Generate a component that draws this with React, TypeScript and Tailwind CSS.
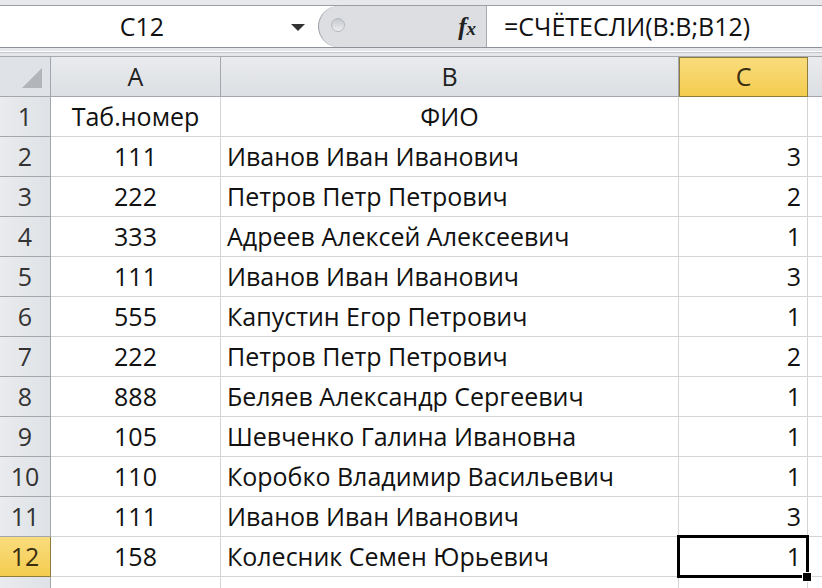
import React from "react";

const rows: [string, string, string, string][] = [
  ["1", "Таб.номер", "ФИО", ""],
  ["2", "111", "Иванов Иван Иванович", "3"],
  ["3", "222", "Петров Петр Петрович", "2"],
  ["4", "333", "Адреев Алексей Алексеевич", "1"],
  ["5", "111", "Иванов Иван Иванович", "3"],
  ["6", "555", "Капустин Егор Петрович", "1"],
  ["7", "222", "Петров Петр Петрович", "2"],
  ["8", "888", "Беляев Александр Сергеевич", "1"],
  ["9", "105", "Шевченко Галина Ивановна", "1"],
  ["10", "110", "Коробко Владимир Васильевич", "1"],
  ["11", "111", "Иванов Иван Иванович", "3"],
  ["12", "158", "Колесник Семен Юрьевич", "1"],
];

const font = { fontFamily: "'Open Sans', 'Liberation Sans', sans-serif" };

export default function App() {
  return (
    <div className="w-[822px] h-[588px] overflow-hidden bg-white text-[#111]" style={font}>
      {/* top strip */}
      <div className="h-[6px] bg-[#e6e8ec] border-b border-[#9a9ea6]" />
      {/* formula bar */}
      <div className="flex h-[42px] border-b border-[#8d9199]">
        <div className="w-[318px] bg-white flex items-center relative">
          <span className="flex-1 text-center text-[25px] pl-[6px]">C12</span>
          <div className="w-[40px] flex justify-center">
            <div className="w-0 h-0 border-l-[7px] border-r-[7px] border-t-[7px] border-l-transparent border-r-transparent border-t-[#333] mt-[2px]" />
          </div>
        </div>
        <div className="w-[169px] bg-[#dcdee2] rounded-l-[26px] border-l border-[#9a9ea6] border-r border-r-[#a8abb1] flex items-center relative">
          <div className="absolute left-[12px] top-[12px] w-[14px] h-[14px] rounded-full bg-gradient-to-b from-[#c6c9ce] to-[#eceef0] border border-[#b5b8be]" />
          <span className="ml-auto mr-[10px] text-[25px] italic font-bold text-[#222] leading-none" style={{ fontFamily: "'Liberation Serif', serif" }}>
            f<span className="text-[19px]">x</span>
          </span>
        </div>
        <div className="flex-1 bg-white flex items-center pl-[17px] text-[25px]">=СЧЁТЕСЛИ(B:B;B12)</div>
      </div>
      {/* gap strip */}
      <div className="h-[9px] bg-[#e4e6ea] border-b border-[#a7aab0] flex flex-col">
        <div className="h-[3px]" />
        <div className="h-[1px] bg-white" />
        <div className="h-[1px] bg-[#c3c6cb]" />
      </div>
      {/* grid */}
      <div className="grid grid-cols-[51px_170px_458px_129px_14px] auto-rows-[40px] text-[25px]">
        {/* header row */}
        <div className="bg-[#dfe2e6] border-r border-b border-[#a3a7ad] relative">
          <svg className="absolute right-[8px] bottom-[8px]" width="20" height="20" viewBox="0 0 20 20">
            <polygon points="20,0 20,20 0,20" fill="#b2b5ba" />
          </svg>
        </div>
        <div className="bg-gradient-to-b from-[#e9ebee] to-[#dcdfe3] border-r border-b border-[#a3a7ad] flex items-center justify-center text-[#222]">A</div>
        <div className="bg-gradient-to-b from-[#e9ebee] to-[#dcdfe3] border-r border-b border-[#a3a7ad] flex items-center justify-center text-[#222]">B</div>
        <div className="bg-gradient-to-b from-[#f9dc7c] to-[#f4cc4e] border border-[#8f7d3b] flex items-center justify-center text-[#3a2f10]">C</div>
        <div className="bg-gradient-to-b from-[#e9ebee] to-[#dcdfe3] border-b border-[#a3a7ad]" />
        {rows.map(([n, a, b, c]) => {
          const sel = n === "12";
          return (
            <React.Fragment key={n}>
              <div
                className={
                  sel
                    ? "bg-gradient-to-b from-[#f9dc7c] to-[#f4cc4e] border-r border-b border-[#8f7d3b] flex items-center justify-center text-[#3a2f10]"
                    : "bg-gradient-to-r from-[#e9ebee] to-[#dfe2e6] border-r border-b border-[#a3a7ad] flex items-center justify-center text-[#333]"
                }
              >
                {n}
              </div>
              <div className="border-r border-b border-[#d4d4d4] flex items-center justify-center">{a}</div>
              <div className={`border-r border-b border-[#d4d4d4] flex items-center ${n === "1" ? "justify-center" : "pl-[6px]"}`}>{b}</div>
              <div className="border-r border-b border-[#d4d4d4] flex items-center justify-end pr-[6px] relative">
                {sel && (
                  <>
                    <div className="absolute left-[-2px] right-[-2px] top-[-2px] bottom-[-2px] border-[3px] border-black" />
                    <div className="absolute right-[-5px] bottom-[-6px] w-[10px] h-[10px] bg-black border border-white z-10" />
                  </>
                )}
                <span className="relative">{c}</span>
              </div>
              <div className="border-b border-[#d4d4d4]" />
            </React.Fragment>
          );
        })}
        <div className="bg-gradient-to-r from-[#e9ebee] to-[#dfe2e6] border-r border-[#a3a7ad]" />
        <div className="border-r border-[#d4d4d4]" />
        <div className="border-r border-[#d4d4d4]" />
        <div className="border-r border-[#d4d4d4]" />
        <div />
      </div>
    </div>
  );
}
